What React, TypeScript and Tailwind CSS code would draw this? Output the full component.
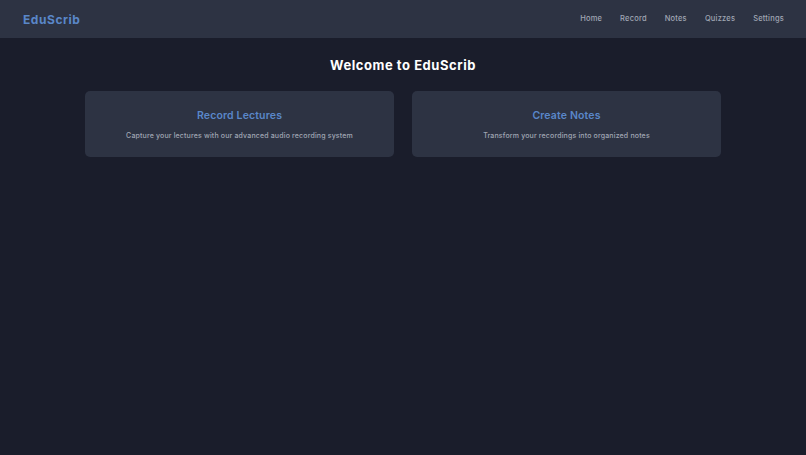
import React from 'react';

const links = ['Home', 'Record', 'Notes', 'Quizzes', 'Settings'];

const cards = [
  { title: 'Record Lectures', text: 'Capture your lectures with our advanced audio recording system' },
  { title: 'Create Notes', text: 'Transform your recordings into organized notes' },
];

const App: React.FC = () => {
  return (
    <div className="min-h-[455px] bg-[#1a1d2b] font-['Inter','Liberation_Sans',sans-serif] text-white">
      {/* Navbar */}
      <nav className="flex h-[38px] items-center justify-between bg-[#2d3343] pl-[23px] pr-[22px]">
        <span className="pt-px text-[12px] font-bold tracking-[0.55px] text-[#5a87c9]">EduScrib</span>
        <div className="flex gap-[18px]">
          {links.map((link) => (
            <a key={link} className="text-[7.5px] font-medium tracking-[0.2px] text-[#a0a6b3]">
              {link}
            </a>
          ))}
        </div>
      </nav>

      {/* Main */}
      <main className="mx-auto w-[636px] pt-[18px]">
        <h1 className="mb-[17px] text-center text-[13px] leading-[18px] font-bold tracking-[0.55px] text-white">
          Welcome to EduScrib
        </h1>
        <div className="grid grid-cols-2 gap-[18px]">
          {cards.map((card) => (
            <div key={card.title} className="h-[66px] rounded-[5px] bg-[#2d3343] pt-[17px] text-center">
              <h2 className="text-[10.5px] leading-[15px] font-semibold tracking-[0.15px] text-[#5a87c9]">{card.title}</h2>
              <p className="mt-[8px] text-[7px] leading-[10px] font-medium tracking-[0.16px] text-[#a0a6b3]">{card.text}</p>
            </div>
          ))}
        </div>
      </main>
    </div>
  );
};

export default App;
